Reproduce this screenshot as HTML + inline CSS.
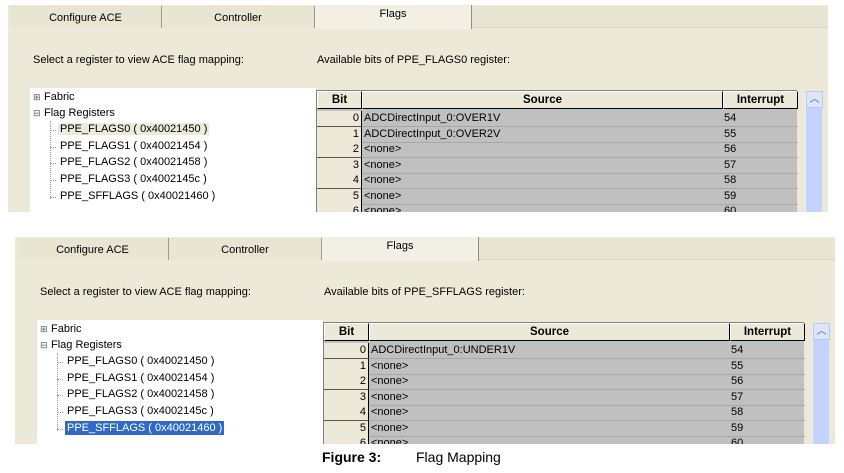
<!DOCTYPE html>
<html><head><meta charset="utf-8"><style>
*{margin:0;padding:0;box-sizing:border-box}
body{width:844px;height:473px;background:#fff;position:relative;overflow:hidden;font-family:"Liberation Sans",sans-serif;font-size:11px;color:#000}
.p{position:absolute;width:820px;height:207px;background:#ece9d8;overflow:hidden}
.a{position:absolute;white-space:nowrap}
.tab{position:absolute;top:1px;height:22px;background:#e8e5d3;border-right:1px solid #9c9a8c;text-align:center;line-height:24px}
.tab.s{top:-2px;height:26px;background:#f2f0e4;border-right:1px solid #8f8d80;line-height:22px}
.tree{position:absolute;left:22px;top:83px;width:286px;height:130px;background:#fff}
.tree .a{font-size:11px}
.tbl{position:absolute;left:308px;top:85px;width:481px;height:130px;background:#c0c0c0;border-top:1px solid #808080;border-left:1px solid #808080}
.hd{position:absolute;top:0;height:18px;background:#ece9d8;border:1px solid #000;border-top-color:#fff;border-left-color:#fff;font-weight:bold;text-align:center;line-height:17px;font-size:11.5px}
.r{position:absolute;left:0;width:481px;height:16px;border-bottom:1px solid #a8a8a8}
.b{position:absolute;left:0;top:0;width:45px;height:16px;background:#ece9d8;border-right:1px solid #000;border-bottom:1px solid #555;text-align:right;padding-right:2px;line-height:15px}
.sv{position:absolute;left:47px;top:0;line-height:15px}
.iv{position:absolute;left:407px;top:0;line-height:15px}
.sb{position:absolute;left:797px;top:86px;width:17px;height:130px;background:#c3d3fb;border-left:1px solid #e8eefc}
.sb .up{position:absolute;left:0;top:0;width:17px;height:17px;background:#dbe5fb;border:1px solid #b8c8f0;text-align:center;font-size:10px;line-height:15px;color:#4d6185}
.ln{position:absolute;border-left:1px dotted #999}
.hl{position:absolute;border-top:1px dotted #999}
</style></head><body>

<div class="p" style="left:8px;top:5px">
 <div class="tab" style="left:2px;width:152px">Configure ACE</div>
 <div class="tab" style="left:154px;width:153px">Controller</div>
 <div class="tab s" style="left:307px;width:157px">Flags</div>
 <div style="position:absolute;left:464px;top:1px;width:356px;height:22px;background:#e8e5d3;border-bottom:1px solid #d8d5c4"></div>
 <div class="a" style="left:25px;top:49px">Select a register to view ACE flag mapping:</div>
 <div class="a" style="left:309px;top:49px">Available bits of PPE_FLAGS0 register:</div>
 <div class="tree">
  <div class="a" style="left:3px;top:4px;font-size:9px;color:#555">⊞</div><div class="a" style="left:14px;top:3px">Fabric</div>
  <div class="a" style="left:3px;top:20px;font-size:9px;color:#555">⊟</div><div class="a" style="left:14px;top:19px">Flag Registers</div>
  <div class="ln" style="left:20px;top:33px;height:78px"></div>
  <div class="hl" style="left:20px;top:42px;width:6px"></div><div class="a" style="left:28px;top:35px;background:#ecead9;padding:0 2px">PPE_FLAGS0 ( 0x40021450 )</div>
  <div class="hl" style="left:20px;top:59px;width:6px"></div><div class="a" style="left:30px;top:52px">PPE_FLAGS1 ( 0x40021454 )</div>
  <div class="hl" style="left:20px;top:75px;width:6px"></div><div class="a" style="left:30px;top:68px">PPE_FLAGS2 ( 0x40021458 )</div>
  <div class="hl" style="left:20px;top:92px;width:6px"></div><div class="a" style="left:30px;top:85px">PPE_FLAGS3 ( 0x4002145c )</div>
  <div class="hl" style="left:20px;top:109px;width:6px"></div><div class="a" style="left:30px;top:102px">PPE_SFFLAGS ( 0x40021460 )</div>
 </div>
 <div class="tbl">
  <div class="hd" style="left:0;width:45px">Bit</div>
  <div class="hd" style="left:45px;width:361px">Source</div>
  <div class="hd" style="left:406px;width:75px">Interrupt</div>
  <div class="r" style="top:20px"><div class="b">0</div><div class="sv">ADCDirectInput_0:OVER1V</div><div class="iv">54</div></div>
  <div class="r" style="top:36px"><div class="b">1</div><div class="sv">ADCDirectInput_0:OVER2V</div><div class="iv">55</div></div>
  <div class="r" style="top:51px"><div class="b">2</div><div class="sv">&lt;none&gt;</div><div class="iv">56</div></div>
  <div class="r" style="top:67px"><div class="b">3</div><div class="sv">&lt;none&gt;</div><div class="iv">57</div></div>
  <div class="r" style="top:82px"><div class="b">4</div><div class="sv">&lt;none&gt;</div><div class="iv">58</div></div>
  <div class="r" style="top:98px"><div class="b">5</div><div class="sv">&lt;none&gt;</div><div class="iv">59</div></div>
  <div class="r" style="top:113px"><div class="b">6</div><div class="sv">&lt;none&gt;</div><div class="iv">60</div></div>
 </div>
 <div class="sb"><div class="up">︿</div></div>
</div>

<div class="p" style="left:15px;top:237px">
 <div class="tab" style="left:2px;width:152px">Configure ACE</div>
 <div class="tab" style="left:154px;width:153px">Controller</div>
 <div class="tab s" style="left:307px;width:157px">Flags</div>
 <div style="position:absolute;left:464px;top:1px;width:356px;height:22px;background:#e8e5d3;border-bottom:1px solid #d8d5c4"></div>
 <div class="a" style="left:25px;top:49px">Select a register to view ACE flag mapping:</div>
 <div class="a" style="left:309px;top:49px">Available bits of PPE_SFFLAGS register:</div>
 <div class="tree">
  <div class="a" style="left:3px;top:4px;font-size:9px;color:#555">⊞</div><div class="a" style="left:14px;top:3px">Fabric</div>
  <div class="a" style="left:3px;top:20px;font-size:9px;color:#555">⊟</div><div class="a" style="left:14px;top:19px">Flag Registers</div>
  <div class="ln" style="left:20px;top:33px;height:78px"></div>
  <div class="hl" style="left:20px;top:42px;width:6px"></div><div class="a" style="left:30px;top:35px">PPE_FLAGS0 ( 0x40021450 )</div>
  <div class="hl" style="left:20px;top:59px;width:6px"></div><div class="a" style="left:30px;top:52px">PPE_FLAGS1 ( 0x40021454 )</div>
  <div class="hl" style="left:20px;top:75px;width:6px"></div><div class="a" style="left:30px;top:68px">PPE_FLAGS2 ( 0x40021458 )</div>
  <div class="hl" style="left:20px;top:92px;width:6px"></div><div class="a" style="left:30px;top:85px">PPE_FLAGS3 ( 0x4002145c )</div>
  <div class="hl" style="left:20px;top:109px;width:6px"></div><div class="a" style="left:28px;top:101px;background:#316ac5;color:#fff;padding:1px 2px">PPE_SFFLAGS ( 0x40021460 )</div>
 </div>
 <div class="tbl">
  <div class="hd" style="left:0;width:45px">Bit</div>
  <div class="hd" style="left:45px;width:361px">Source</div>
  <div class="hd" style="left:406px;width:75px">Interrupt</div>
  <div class="r" style="top:20px"><div class="b">0</div><div class="sv">ADCDirectInput_0:UNDER1V</div><div class="iv">54</div></div>
  <div class="r" style="top:36px"><div class="b">1</div><div class="sv">&lt;none&gt;</div><div class="iv">55</div></div>
  <div class="r" style="top:51px"><div class="b">2</div><div class="sv">&lt;none&gt;</div><div class="iv">56</div></div>
  <div class="r" style="top:67px"><div class="b">3</div><div class="sv">&lt;none&gt;</div><div class="iv">57</div></div>
  <div class="r" style="top:82px"><div class="b">4</div><div class="sv">&lt;none&gt;</div><div class="iv">58</div></div>
  <div class="r" style="top:98px"><div class="b">5</div><div class="sv">&lt;none&gt;</div><div class="iv">59</div></div>
  <div class="r" style="top:113px"><div class="b">6</div><div class="sv">&lt;none&gt;</div><div class="iv">60</div></div>
 </div>
 <div class="sb"><div class="up">︿</div></div>
</div>

<div class="a" style="left:322px;top:449px;font-size:14px;font-weight:bold">Figure 3:</div>
<div class="a" style="left:416px;top:449px;font-size:14px">Flag Mapping</div>
</body></html>
